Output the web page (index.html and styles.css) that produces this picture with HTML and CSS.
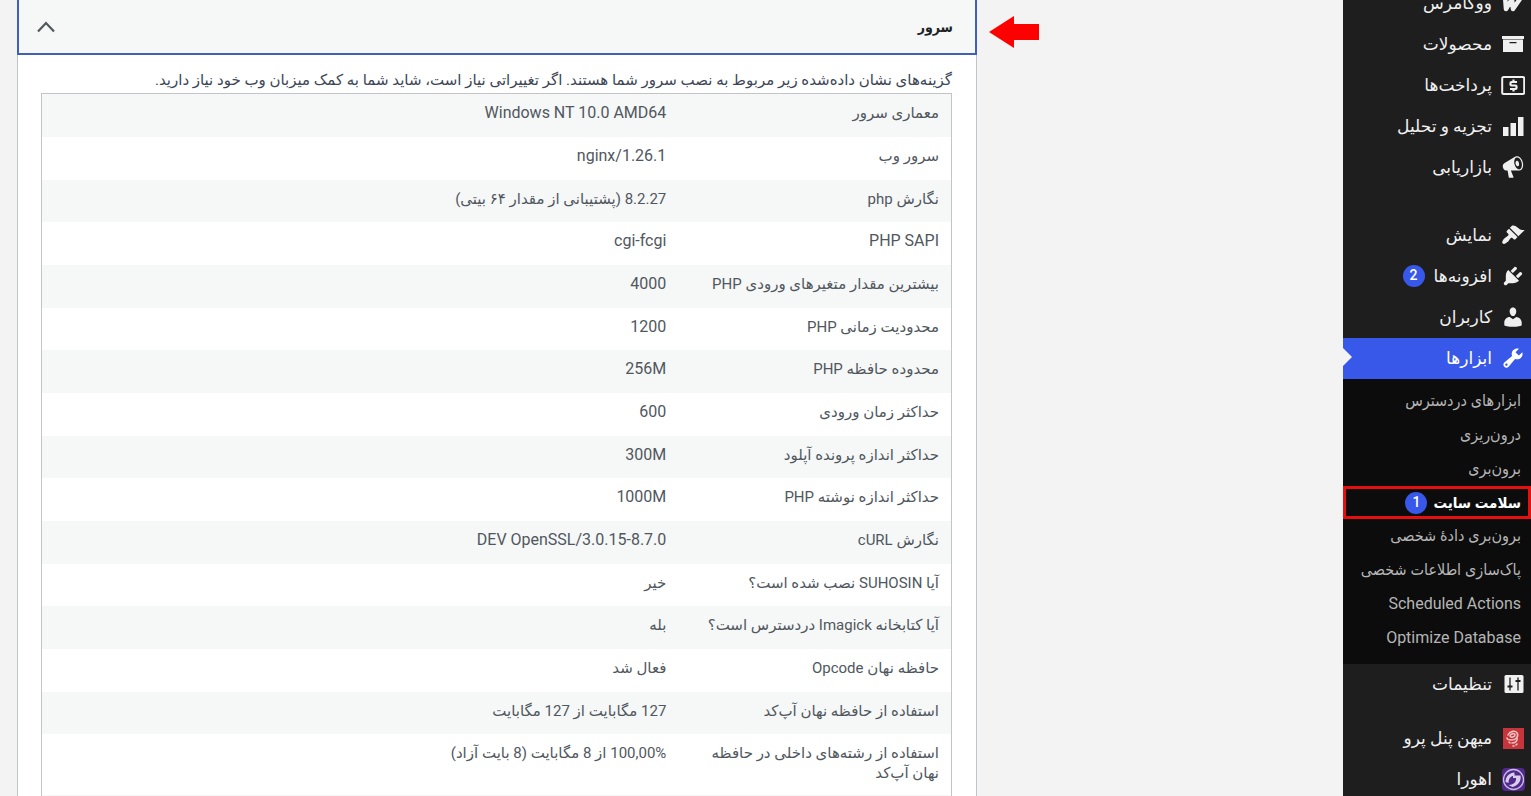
FILE: index.html
```html
<!DOCTYPE html>
<html lang="fa" dir="rtl">
<head>
    <meta charset="UTF-8">
    <meta name="viewport" content="width=device-width, initial-scale=1.0">
    <title>سلامت سایت</title>
    <link rel="stylesheet" href="styles.css">
</head>
<body>
    <nav class="sidebar">
        <ul class="menu">
            <li>
                <a class="menu-link" href="#">
                    <svg class="icon" viewBox="0 0 24 24"><path d="M4 5l1 13 6-10 1 10 9-13" fill="none" stroke="currentColor" stroke-width="4.500" stroke-linejoin="round" stroke-linecap="round"/></svg>
                    <span>ووکامرس</span>
                </a>
            </li>
            <li>
                <a class="menu-link" href="#">
                    <svg class="icon" viewBox="0 0 24 24"><path d="M1 4h22v3H1zM2 7.500h20V20H2zM8.500 10v1.200h7V10z" fill-rule="evenodd"/></svg>
                    <span>محصولات</span>
                </a>
            </li>
            <li>
                <a class="menu-link" href="#">
                    <svg class="icon" viewBox="0 0 24 24"><rect x="1.200" y="4" width="22" height="17" rx="1.500" fill="none" stroke="currentColor" stroke-width="2"/><path d="M16 9h-5.500a1 1 0 0 0-1 1v1.500a1 1 0 0 0 1 1h4a1 1 0 0 1 1 1V15a1 1 0 0 1-1 1H9M12.500 6.500V9M12.500 16v2.500" fill="none" stroke="currentColor" stroke-width="2.200"/></svg>
                    <span>پرداخت‌ها</span>
                </a>
            </li>
            <li>
                <a class="menu-link" href="#">
                    <svg class="icon" viewBox="0 0 24 24"><path d="M2 13h5.500v9H2zM9.500 9H15v13H9.500zM17 3h5.500v19H17z"/></svg>
                    <span>تجزیه و تحلیل</span>
                </a>
            </li>
            <li>
                <a class="menu-link" href="#">
                    <svg class="icon" viewBox="0 0 20 20"><path fill-rule="evenodd" d="M18.150 5.940c.46 1.620.38 3.220-.02 4.480-.42 1.280-1.260 2.180-2.300 2.480-.16.060-.26.060-.4.060-.06.020-.12.020-.18.020-.06.020-.14.020-.22.020h-6.800l2.220 5.500c.02.140-.06.260-.14.340-.08.100-.24.160-.34.160H6.950c-.1 0-.26-.06-.34-.16-.08-.08-.16-.2-.14-.34l-1-5.500H4.250l-.02-.02c-.5.060-1.080-.18-1.540-.62s-.88-1.080-1.060-1.880c-.24-.8-.2-1.560-.02-2.200.18-.62.58-1.080 1.060-1.300l.02-.02 9-5.400c.1-.06.18-.1.24-.16.060-.04.140-.08.240-.12.160-.08.280-.12.500-.18 1.040-.3 2.240.1 3.220.98s1.840 2.240 2.260 3.860zm-2.580 5.980h-.02c.4-.1.740-.34 1.040-.7.580-.7.860-1.760.860-3.040 0-.64-.1-1.300-.28-1.980-.34-1.360-1.020-2.500-1.780-3.240s-1.680-1.100-2.460-.88c-.82.220-1.400.960-1.700 2-.32 1.040-.28 2.360.060 3.720.38 1.360 1 2.500 1.800 3.240.78.740 1.620 1.100 2.480.88zm-2.540-7.080c.22-.04.42-.02.62.040.38.160.760.480 1.020 1s.42 1.200.42 1.780c0 .3-.04.56-.12.8-.18.480-.44.840-.86.940-.34.100-.8-.06-1.140-.4s-.64-.86-.78-1.500c-.18-.62-.12-1.240.020-1.720s.48-.84.820-.94z"/></svg>
                    <span>بازاریابی</span>
                </a>
            </li>
            <li class="separator"></li>
            <li>
                <a class="menu-link" href="#">
                    <svg class="icon" viewBox="0 0 20 20"><path d="M14.480 11.060L7.410 3.990l1.500-1.500c.5-.56 2.300-.47 3.510.32 1.210.8 1.430 1.280 2.910 2.100 1.180.64 2.450 1.260 4.450.85zm-.71.710L6.700 4.700 4.930 6.470c-.39.390-.39 1.020 0 1.410l1.060 1.060c.39.390.39 1.030 0 1.420-.6.6-1.430 1.110-2.210 1.690-.35.260-.7.530-1.010.840C1.430 14.230.4 16.080 1.400 17.070c.99 1 2.840-.03 4.180-1.360.31-.31.58-.66.850-1.020.57-.78 1.080-1.610 1.690-2.210.39-.39 1.020-.39 1.410 0l1.060 1.060c.39.390 1.020.390 1.410 0z"/></svg>
                    <span>نمایش</span>
                </a>
            </li>
            <li>
                <a class="menu-link" href="#">
                    <svg class="icon" viewBox="0 0 20 20"><path d="M13.110 4.360L9.870 7.600 8 5.730l3.240-3.240c.35-.34 1.050-.2 1.560.32.52.51.66 1.210.31 1.550zm-8 1.770l.91-1.120 9.010 9.010-1.190.84c-.71.710-2.630 1.160-3.820 1.160H6.140L4.900 17.260c-.59.590-1.540.590-2.120 0-.59-.58-.59-1.530 0-2.120l1.240-1.240v-3.880c0-1.130.4-3.190 1.090-3.890zm7.260 3.970l3.240-3.240c.34-.35 1.040-.21 1.550.31.52.51.66 1.210.31 1.550l-3.240 3.250z"/></svg>
                    <span>افزونه‌ها</span>
                    <span class="badge">2</span>
                </a>
            </li>
            <li>
                <a class="menu-link" href="#">
                    <svg class="icon" viewBox="0 0 20 20"><path d="M10 9.250c-2.270 0-2.730-3.440-2.730-3.440C7 4.020 7.820 2 9.970 2c2.160 0 2.980 2.020 2.710 3.810 0 0-.41 3.440-2.680 3.440zm0 2.570L12.720 10c2.390 0 4.520 2.330 4.520 4.530v2.490s-3.650 1.130-7.240 1.130c-3.650 0-7.240-1.130-7.240-1.130v-2.490c0-2.250 1.940-4.480 4.470-4.480z"/></svg>
                    <span>کاربران</span>
                </a>
            </li>
            <li>
                <a class="menu-link current" href="#">
                    <svg class="icon" viewBox="0 0 20 20"><path fill-rule="evenodd" d="M16.680 9.770c-1.340 1.340-3.300 1.670-4.950.99l-5.410 6.520c-.99.990-2.590.990-3.580 0s-.99-2.590 0-3.570l6.520-5.420c-.68-1.650-.35-3.610.99-4.950 1.280-1.280 3.120-1.620 4.720-1.060l-2.890 2.890 2.820 2.820 2.860-2.870c.53 1.580.18 3.390-1.080 4.650zM3.810 16.210c.4.390 1.040.390 1.430 0 .4-.4.4-1.040 0-1.430-.39-.4-1.030-.4-1.430 0-.39.390-.39 1.030 0 1.430z"/></svg>
                    <span>ابزارها</span>
                </a>
                <ul class="submenu">
                    <li><a href="#">ابزارهای دردسترس</a></li>
                    <li><a href="#">درون‌ریزی</a></li>
                    <li><a href="#">برون‌بری</a></li>
                    <li><a class="active" href="#">سلامت سایت <span class="badge">1</span></a></li>
                    <li><a href="#">برون‌بری دادهٔ شخصی</a></li>
                    <li><a href="#">پاک‌سازی اطلاعات شخصی</a></li>
                    <li><a href="#">Scheduled Actions</a></li>
                    <li><a href="#">Optimize Database</a></li>
                </ul>
            </li>
            <li>
                <a class="menu-link" href="#">
                    <svg class="icon" viewBox="0 0 24 24"><rect x="3.500" y="3" width="19" height="18" rx="1.500"/><path d="M9 5.500v13M17 5.500v13" stroke="#1e1e1e" stroke-width="1.300" fill="none"/><path d="M6.500 14.500h5M14.500 9h5" stroke="#1e1e1e" stroke-width="2" fill="none"/></svg>
                    <span>تنظیمات</span>
                </a>
            </li>
            <li class="separator small"></li>
            <li>
                <a class="menu-link" href="#">
                    <svg class="icon" viewBox="0 0 24 24"><rect x="2" y="2" width="21" height="21" fill="#c5353b"/><path d="M7 9c2-4 7-5 9-2 2 3-1 7-5 7-3 0-5-1-5-2M9 10c1-3 5-3 5-1s-4 3-5 1zM16 12c1 3-2 5-5 5M9 17l-1-1M12 20h1M15 19l1-1" fill="none" stroke="#edc0c0" stroke-width="1.600" stroke-linecap="round"/></svg>
                    <span>میهن پنل پرو</span>
                </a>
            </li>
            <li>
                <a class="menu-link" href="#">
                    <svg class="icon" viewBox="0 0 24 24"><rect x="1" y="1" width="23" height="23" rx="4" fill="#51288c"/><circle cx="12.500" cy="12.500" r="10" fill="none" stroke="#c9badf" stroke-width="1.300"/><path d="M4.500 15c0-5 3-9 9-9.500v3c-4 .5-6 3-6 7.500zM12 8.500h7.500c1 5-2 10-8 11.500l-4-2c5 0 8-3 7.500-7h-3z" fill="#d9cdea"/></svg>
                    <span>اهورا</span>
                </a>
            </li>
        </ul>
    </nav>

    <main class="content">
        <section class="panel">
            <h2 class="panel-heading">
                <button class="panel-trigger" type="button" aria-expanded="true" aria-controls="server-info">
                    <span>سرور</span>
                    <svg class="chevron" viewBox="0 0 18 12"><path d="M1 10.500L9 2l8 8.500" fill="none" stroke="currentColor" stroke-width="2.200"/></svg>
                </button>
                <svg class="arrow" viewBox="0 0 50 32"><path d="M0 16L25 0v8h25v16H25v8z" fill="#ff0000"/></svg>
            </h2>
            <div class="panel-body" id="server-info">
                <p class="description">گزینه‌های نشان داده‌شده زیر مربوط به نصب سرور شما هستند. اگر تغییراتی نیاز است، شاید شما به کمک میزبان وب خود نیاز دارید.</p>
                <table class="info-table">
                    <tbody>
                        <tr><td>معماری سرور</td><td class="latin">Windows NT 10.0 AMD64</td></tr>
                        <tr><td>سرور وب</td><td class="latin">nginx/1.26.1</td></tr>
                        <tr><td>نگارش php</td><td>8.2.27 (پشتیبانی از مقدار ۶۴ بیتی)</td></tr>
                        <tr><td class="latin">PHP SAPI</td><td class="latin">cgi-fcgi</td></tr>
                        <tr><td>بیشترین مقدار متغیرهای ورودی PHP</td><td class="latin">4000</td></tr>
                        <tr><td>محدودیت زمانی PHP</td><td class="latin">1200</td></tr>
                        <tr><td>محدوده حافظه PHP</td><td class="latin">256M</td></tr>
                        <tr><td>حداکثر زمان ورودی</td><td class="latin">600</td></tr>
                        <tr><td>حداکثر اندازه پرونده آپلود</td><td class="latin">300M</td></tr>
                        <tr><td>حداکثر اندازه نوشته PHP</td><td class="latin">1000M</td></tr>
                        <tr><td>نگارش cURL</td><td class="latin">8.7.0-DEV OpenSSL/3.0.15</td></tr>
                        <tr><td>آیا SUHOSIN نصب شده است؟</td><td>خیر</td></tr>
                        <tr><td>آیا کتابخانه Imagick دردسترس است؟</td><td>بله</td></tr>
                        <tr><td>حافظه نهان Opcode</td><td>فعال شد</td></tr>
                        <tr><td>استفاده از حافظه نهان آپ‌کد</td><td>127 مگابایت از 127 مگابایت</td></tr>
                        <tr><td>استفاده از رشته‌های داخلی در حافظه نهان آپ‌کد</td><td>100,00% از 8 مگابایت (8 بایت آزاد)</td></tr>
                        <tr><td></td><td></td></tr>
                    </tbody>
                </table>
            </div>
        </section>
    </main>
</body>
</html>
```
FILE: styles.css
```css
* {
    margin: 0;
    padding: 0;
    box-sizing: border-box;
}

body {
    display: flex;
    height: 100vh;
    overflow: hidden;
    background: #f3f3f3;
    color: #50575e;
    font-family: Roboto, "DejaVu Sans", sans-serif;
    font-size: 15px;
    line-height: 20px;
}

ul {
    list-style: none;
}

a {
    color: inherit;
    text-decoration: none;
}

/* Sidebar */
.sidebar {
    flex: 0 0 188px;
    background: #1e1e1e;
    color: #f0f0f1;
}

.menu {
    margin-top: -17px;
}

.menu-link {
    display: flex;
    align-items: center;
    gap: 9px;
    height: 41px;
    padding: 0 6px 2px;
    font-size: 17px;
    white-space: nowrap;
}

.menu-link.current {
    position: relative;
    background: #3858e9;
    color: #fff;
}

.menu-link.current::after {
    content: "";
    position: absolute;
    left: 0;
    top: 10px;
    border: 9px solid transparent;
    border-left-color: #f3f3f3;
    border-right: 0;
}

.icon {
    flex: none;
    width: 24px;
    height: 24px;
    fill: currentColor;
}

.separator {
    height: 27px;
}

.separator.small {
    height: 13px;
}

.badge {
    display: inline-block;
    width: 22px;
    height: 22px;
    border-radius: 50%;
    background: #3858e9;
    color: #fff;
    font-size: 14px;
    font-weight: 500;
    line-height: 20px;
    text-align: center;
}

.submenu {
    padding: 5px 0 9px;
    background: #0c0c0c;
    color: #b5b5b6;
    font-family: Roboto, "DejaVu Sans Condensed", "DejaVu Sans", sans-serif;
    font-size: 16px;
}

.submenu a {
    display: flex;
    align-items: center;
    gap: 6px;
    height: 34px;
    padding: 0 10px;
    white-space: nowrap;
}

.submenu .active {
    height: 33px;
    padding: 0 7px;
    border: 3px solid #e60f0f;
    color: #fff;
    font-size: 15px;
    font-weight: 700;
}

/* Server panel */
.content {
    flex: 1;
    min-width: 0;
    padding: 0 366px 0 17px;
}

.panel {
    min-height: 100vh;
    background: #fff;
    border: 1px solid #c3c4c7;
    border-width: 0 1px;
}

.panel-heading {
    position: relative;
    margin: 0 -1px;
}

.panel-trigger {
    display: flex;
    align-items: center;
    justify-content: space-between;
    width: 100%;
    height: 55px;
    padding: 0 22px 0 18px;
    background: #f6f7f7;
    border: 2px solid #3f5fb8;
    border-top: 0;
    color: #1d2327;
    font-family: Roboto, "DejaVu Sans Condensed", "DejaVu Sans", sans-serif;
    font-size: 14px;
    font-weight: 700;
    cursor: pointer;
}

.chevron {
    width: 18px;
    height: 12px;
    color: #50575e;
}

.arrow {
    position: absolute;
    top: 16px;
    right: -62px;
    width: 50px;
    height: 32px;
}

.panel-body {
    padding: 15px 24px 0 23px;
}

.description {
    height: 23px;
    color: #3c4656;
    white-space: nowrap;
}

.info-table {
    width: 100%;
    border: 1px solid #c3c4c7;
    border-spacing: 0;
    table-layout: fixed;
}

.info-table td {
    height: 43px;
    padding: 9px 12px 12px;
    text-align: right;
    vertical-align: top;
}

.info-table tr:nth-child(3n) td {
    height: 42px;
}

.info-table td:first-child {
    width: 30%;
}

.info-table .latin {
    font-size: 16px;
}

.info-table tr:nth-child(odd) {
    background: #f6f7f7;
}
```
